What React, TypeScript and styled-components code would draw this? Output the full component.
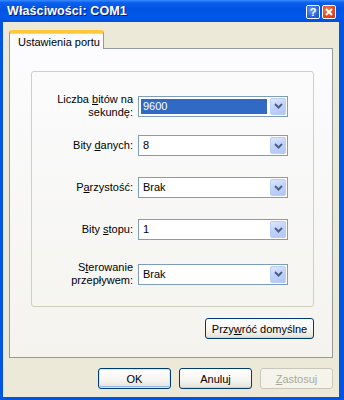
import styled, { createGlobalStyle } from "styled-components";

const GlobalStyle = createGlobalStyle`
  html, body {
    margin: 0;
    padding: 0;
    background: #fff;
  }
  * {
    box-sizing: border-box;
  }
`;

type Field = {
  label: React.ReactNode;
  value: string;
  selected?: boolean;
};

const fields: Field[] = [
  {
    label: (
      <>
        Liczba <u>b</u>itów na
        <br />
        sekundę:
      </>
    ),
    value: "9600",
    selected: true,
  },
  {
    label: (
      <>
        Bity <u>d</u>anych:
      </>
    ),
    value: "8",
  },
  {
    label: (
      <>
        P<u>a</u>rzystość:
      </>
    ),
    value: "Brak",
  },
  {
    label: (
      <>
        Bity <u>s</u>topu:
      </>
    ),
    value: "1",
  },
  {
    label: (
      <>
        S<u>t</u>erowanie
        <br />
        przepływem:
      </>
    ),
    value: "Brak",
  },
];

const Chevron = () => (
  <svg width="9" height="6" viewBox="0 0 9 6">
    <path d="M1 1 L4.5 4.5 L8 1" fill="none" stroke="#4d6185" strokeWidth="2" />
  </svg>
);

const App: React.FC = () => {
  return (
    <>
      <GlobalStyle />
      <Window>
        <TitleBar>
          <Title>Właściwości: COM1</Title>
          <CaptionButtons>
            <CaptionButton $kind="help">?</CaptionButton>
            <CaptionButton $kind="close">
              <svg width="8" height="8" viewBox="0 0 8 8">
                <path d="M1 1 L7 7 M7 1 L1 7" stroke="#fff" strokeWidth="1.8" />
              </svg>
            </CaptionButton>
          </CaptionButtons>
        </TitleBar>
        <Client>
          <TabStrip>
            <Tab>Ustawienia portu</Tab>
          </TabStrip>
          <TabPage>
            <GroupBox>
              {fields.map((f, i) => (
                <FieldRow key={i}>
                  <FieldLabel>{f.label}</FieldLabel>
                  <Combo>
                    <ComboValue $selected={f.selected}>{f.value}</ComboValue>
                    <ComboButton>
                      <Chevron />
                    </ComboButton>
                  </Combo>
                </FieldRow>
              ))}
            </GroupBox>
            <ResetRow>
              <Button $width={109}>
                Przy<u>w</u>róć domyślne
              </Button>
            </ResetRow>
          </TabPage>
          <DialogButtons>
            <Button $default>OK</Button>
            <Button>Anuluj</Button>
            <Button disabled>
              <u>Z</u>astosuj
            </Button>
          </DialogButtons>
        </Client>
      </Window>
    </>
  );
};

const Window = styled.div`
  width: 344px;
  height: 400px;
  display: flex;
  flex-direction: column;
  background: #0054e3;
  font-family: "Liberation Sans", Arial, sans-serif;
  font-size: 11px;
  color: #000;
`;

const TitleBar = styled.div`
  height: 22px;
  flex: none;
  display: flex;
  align-items: center;
  justify-content: space-between;
  padding: 0 8px 0 7px;
  background: linear-gradient(
    180deg,
    #3a8cff 0%,
    #0a5fef 12%,
    #0054e3 40%,
    #0058ea 80%,
    #0050dc 100%
  );
`;

const Title = styled.span`
  color: #fff;
  font-weight: bold;
  font-size: 12.5px;
  text-shadow: 1px 1px #0a1883;
  letter-spacing: 0.1px;
`;

const CaptionButtons = styled.div`
  display: flex;
  gap: 2px;
  margin-top: 2px;
`;

const CaptionButton = styled.div<{ $kind: "help" | "close" }>`
  width: 14px;
  height: 14px;
  border: 1px solid #fff;
  border-radius: 2px;
  display: flex;
  align-items: center;
  justify-content: center;
  color: #fff;
  font-weight: bold;
  font-size: 11px;
  background: ${(p) =>
    p.$kind === "close"
      ? "radial-gradient(circle at 40% 35%, #f0835f 0%, #e0481d 60%, #c23a12 100%)"
      : "radial-gradient(circle at 40% 35%, #6f9cf5 0%, #2b62e0 60%, #1c4fc8 100%)"};
`;

const Client = styled.div`
  flex: 1;
  display: flex;
  flex-direction: column;
  background: #ece9d8;
  margin: 0 5px 3px 3px;
  padding: 8px 6px 0 6px;
`;

const TabStrip = styled.div`
  display: flex;
  height: 18px;
  position: relative;
  z-index: 1;
`;

const Tab = styled.div`
  width: 95px;
  height: 19px;
  padding-top: 3px;
  padding-left: 8px;
  border: 1px solid #919b9c;
  border-top: 3px solid #ffc83c;
  border-bottom: none;
  border-radius: 3px 3px 0 0;
  background: #fcfcfe;
  box-shadow: inset 0 1px 0 #fdd77a;
  line-height: 13px;
`;

const TabPage = styled.div`
  width: 324px;
  height: 310px;
  border: 1px solid #919b9c;
  background: linear-gradient(180deg, #fcfcfe 0%, #f4f3ee 100%);
  padding: 22px 18px 0 21px;
  display: flex;
  flex-direction: column;
`;

const GroupBox = styled.div`
  width: 283px;
  height: 236px;
  border: 1px solid #d0d0bf;
  border-radius: 3px;
  padding: 21px 25px 0 0;
  display: flex;
  flex-direction: column;
  gap: 21px;
`;

const FieldRow = styled.div`
  display: grid;
  grid-template-columns: 1fr 150px;
  column-gap: 5px;
  align-items: center;
  height: 21px;
`;

const FieldLabel = styled.div`
  text-align: right;
  line-height: 13px;
`;

const Combo = styled.div`
  height: 21px;
  border: 1px solid #7f9db9;
  background: #fff;
  display: flex;
  align-items: center;
  padding: 1px 1px 1px 2px;
  gap: 3px;
`;

const ComboValue = styled.div<{ $selected?: boolean }>`
  flex: 1;
  height: 15px;
  line-height: 15px;
  padding-left: 2px;
  background: ${(p) => (p.$selected ? "#316ac5" : "transparent")};
  color: ${(p) => (p.$selected ? "#fff" : "#000")};
`;

const ComboButton = styled.div`
  width: 16px;
  height: 17px;
  border: 1px solid #b9cdf7;
  border-radius: 2px;
  background: linear-gradient(160deg, #dde8fe 0%, #c1d3fb 45%, #b2c6f5 100%);
  display: flex;
  align-items: center;
  justify-content: center;
`;

const ResetRow = styled.div`
  display: flex;
  justify-content: flex-end;
  margin-top: 11px;
`;

const Button = styled.button<{ $width?: number; $default?: boolean }>`
  width: ${(p) => p.$width ?? 73}px;
  height: 21px;
  padding: 0;
  font-family: "Liberation Sans", Arial, sans-serif;
  font-size: 11px;
  color: #000;
  border: 1px solid #003c74;
  border-radius: 3px;
  background: linear-gradient(180deg, #ffffff 0%, #f5f4f0 60%, #e3e1d7 100%);
  box-shadow: ${(p) =>
    p.$default
      ? "inset 0 0 0 1px #cee7ff, inset 0 -1px 0 1px #98b8ea"
      : "inset 0 -1px 0 #d6d0c5"};

  &:disabled {
    color: #aca899;
    border-color: #c9c7ba;
    background: #f5f4ea;
    box-shadow: none;
  }
`;

const DialogButtons = styled.div`
  display: flex;
  justify-content: flex-end;
  gap: 8px;
  margin-top: 10px;
  padding-right: 0;
`;

export default App;
